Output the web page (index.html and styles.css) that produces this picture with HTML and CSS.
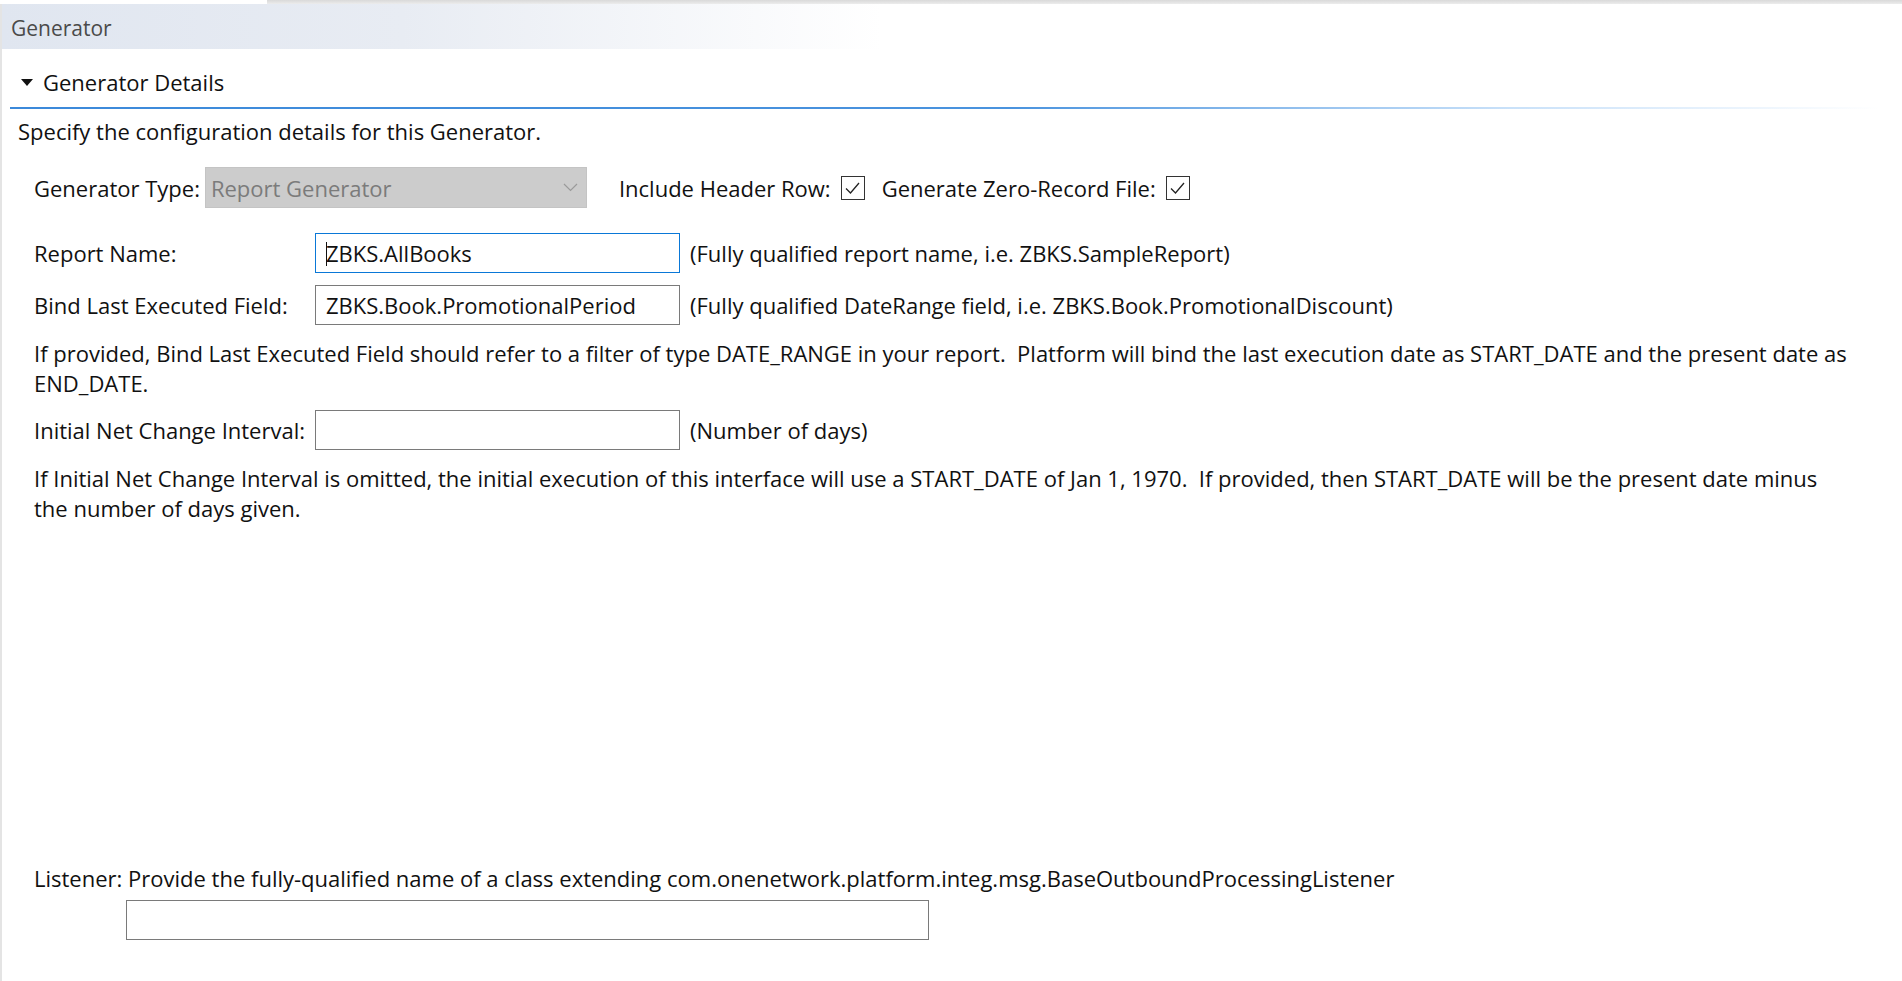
FILE: index.html
```html
<!DOCTYPE html>
<html>
<head>
<meta charset="utf-8">
<title>Generator</title>
<link rel="stylesheet" href="styles.css">
</head>
<body>
<div class="tabstrip"><div class="tab"></div><div class="tabrest"></div></div>
<div class="frame">
  <div class="titlebar">Generator</div>
  <div class="section">
    <div class="section-head">
      <svg class="twisty" width="12" height="7" viewBox="0 0 12 7"><path d="M0 0 H12 L6 7 Z" fill="#111"/></svg>
      <span>Generator Details</span>
    </div>
    <div class="section-rule"></div>
    <p class="intro">Specify the configuration details for this Generator.</p>
    <div class="body">
      <div class="row type-row">
        <span class="label">Generator Type:</span>
        <div class="combo"><span>Report Generator</span>
          <svg class="chev" width="15" height="9" viewBox="0 0 15 9"><path d="M1 1 L7.5 7.5 L14 1" fill="none" stroke="#9a9a9a" stroke-width="1.2"/></svg>
        </div>
        <span class="label check-label">Include Header Row:</span>
        <span class="check"><svg width="17" height="14" viewBox="0 0 17 14"><path d="M2 7.5 L6.5 12 L15 2" fill="none" stroke="#222" stroke-width="1.3"/></svg></span>
        <span class="label check-label2">Generate Zero-Record File:</span>
        <span class="check"><svg width="17" height="14" viewBox="0 0 17 14"><path d="M2 7.5 L6.5 12 L15 2" fill="none" stroke="#222" stroke-width="1.3"/></svg></span>
      </div>
      <div class="row field-row first">
        <span class="label wide">Report Name:</span>
        <div class="input focus"><span class="caret"></span>ZBKS.AllBooks</div>
        <span class="hint">(Fully qualified report name, i.e. ZBKS.SampleReport)</span>
      </div>
      <div class="row field-row">
        <span class="label wide">Bind Last Executed Field:</span>
        <div class="input">ZBKS.Book.PromotionalPeriod</div>
        <span class="hint">(Fully qualified DateRange field, i.e. ZBKS.Book.PromotionalDiscount)</span>
      </div>
      <p class="para">If provided, Bind Last Executed Field should refer to a filter of type DATE_RANGE in your report.&nbsp; Platform will bind the last execution date as START_DATE and the present date as END_DATE.</p>
      <div class="row field-row">
        <span class="label wide">Initial Net Change Interval:</span>
        <div class="input"></div>
        <span class="hint">(Number of days)</span>
      </div>
      <p class="para">If Initial Net Change Interval is omitted, the initial execution of this interface will use a START_DATE of Jan 1, 1970.&nbsp; If provided, then START_DATE will be the present date minus the number of days given.</p>
      <div class="listener">
        <div class="listener-label">Listener: Provide the fully-qualified name of a class extending com.onenetwork.platform.integ.msg.BaseOutboundProcessingListener</div>
        <div class="input listener-input"></div>
      </div>
    </div>
  </div>
</div>
</body>
</html>
```
FILE: styles.css
```css
html, body {
  margin: 0;
  padding: 0;
  background: #ffffff;
  height: 100%;
  overflow: hidden;
}
body {
  font-family: "Open Sans", "Noto Sans", sans-serif;
  font-size: 22px;
  color: #111111;
}
.tabstrip {
  display: flex;
  height: 4px;
}
.tab {
  width: 267px;
  background: #ffffff;
}
.tabrest {
  flex: 1;
  background: linear-gradient(#d9d9d9, #ececec);
}
.frame {
  border-left: 2px solid #e4e4e4;
  height: calc(100% - 4px);
  box-sizing: border-box;
}
.titlebar {
  height: 45px;
  line-height: 49px;
  padding-left: 9px;
  color: #4a4a4a;
  font-size: 21px;
  background: linear-gradient(90deg, #e0e6f0 0px, #e8ecf3 400px, #ffffff 880px);
}
.section-head {
  display: flex;
  align-items: center;
  height: 50px;
  padding-top: 8px;
  padding-left: 19px;
  gap: 10px;
  color: #111;
}
.section-rule {
  margin-left: 8px;
  height: 2px;
  background: linear-gradient(90deg, #3b89da 0px, #4a93de 1000px, rgba(120,180,240,0.4) 1500px, rgba(255,255,255,0) 1870px);
}
.intro {
  margin: 9px 0 0 16px;
  line-height: 26px;
}
.body {
  padding-left: 32px;
}
.row {
  display: flex;
  align-items: center;
}
.type-row {
  margin-top: 23px;
  height: 41px;
}
.label {
  white-space: nowrap;
}
.combo {
  margin-left: 5px;
  width: 382px;
  height: 41px;
  box-sizing: border-box;
  background: #cccccc;
  border: 1px solid #c4c4c4;
  display: flex;
  align-items: center;
  justify-content: space-between;
  padding: 0 8px 0 5px;
  color: #7b7b7b;
}
.check-label {
  margin-left: 32px;
}
.check-label2 {
  margin-left: 17px;
}
.check {
  margin-left: 10px;
  width: 24px;
  height: 24px;
  box-sizing: border-box;
  border: 1px solid #333;
  background: #fff;
  display: flex;
  align-items: center;
  justify-content: center;
}
.field-row {
  height: 40px;
  margin-top: 12px;
}
.field-row.first {
  margin-top: 25px;
}
.wide {
  width: 281px;
}
.input {
  width: 365px;
  height: 40px;
  box-sizing: border-box;
  border: 1px solid #7a7a7a;
  background: #fff;
  padding-left: 10px;
  display: flex;
  align-items: center;
  position: relative;
}
.input.focus {
  border-color: #0a78d7;
}
.caret {
  position: absolute;
  left: 10px;
  top: 8px;
  width: 1px;
  height: 24px;
  background: #111;
}
.hint {
  margin-left: 10px;
  white-space: nowrap;
}
.para {
  margin: 13px 51px 12px 0;
  line-height: 30px;
}
.listener {
  margin-top: 340px;
}
.listener-label {
  line-height: 30px;
}
.listener-input {
  margin-left: 92px;
  margin-top: 7px;
  width: 803px;
}
```
